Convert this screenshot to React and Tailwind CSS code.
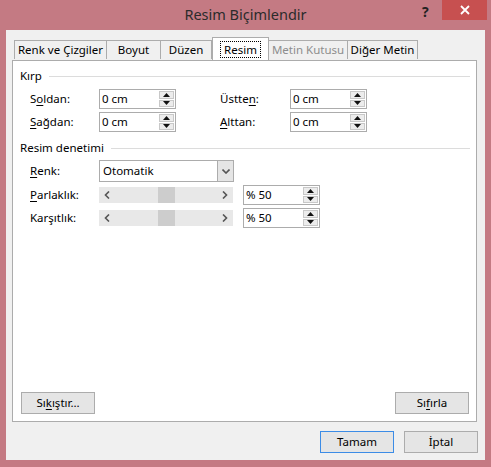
import React from "react";

const font = { fontFamily: '"Noto Sans", "Open Sans", sans-serif' };

function U({ children }) {
  return <span className="underline underline-offset-2">{children}</span>;
}

function SpinBtns() {
  return (
    <div className="flex w-[16px] flex-col gap-[1px] p-[1px] pl-0">
      <div className="flex flex-1 items-center justify-center border border-[#c8c8c8] bg-[#ececec]">
        <svg width="7" height="4" viewBox="0 0 7 4"><path d="M0 4 L3.5 0 L7 4 Z" fill="#111" /></svg>
      </div>
      <div className="flex flex-1 items-center justify-center border border-[#c8c8c8] bg-[#ececec]">
        <svg width="7" height="4" viewBox="0 0 7 4"><path d="M0 0 L3.5 4 L7 0 Z" fill="#111" /></svg>
      </div>
    </div>
  );
}

function Spin({ value }) {
  return (
    <div className="flex h-[20px] w-[77px] shrink-0 border border-[#acacac] bg-white">
      <div className="flex flex-1 items-center pl-[2px] text-black">{value}</div>
      <SpinBtns />
    </div>
  );
}

function Slider() {
  return (
    <div className="flex h-[16px] w-[134px] shrink-0 items-center bg-[#e8e8e8]">
      <div className="flex w-[16px] justify-center">
        <svg width="6" height="8" viewBox="0 0 6 8"><path d="M5 0.5 L1.5 4 L5 7.5" fill="none" stroke="#555" strokeWidth="1.6" /></svg>
      </div>
      <div className="w-[43px]" />
      <div className="h-[16px] w-[17px] bg-[#cdcdcd]" />
      <div className="flex-1" />
      <div className="flex w-[16px] justify-center">
        <svg width="6" height="8" viewBox="0 0 6 8"><path d="M1 0.5 L4.5 4 L1 7.5" fill="none" stroke="#555" strokeWidth="1.6" /></svg>
      </div>
    </div>
  );
}

function Btn({ children, primary }) {
  return (
    <div
      className={`flex h-[22px] w-[74px] items-center justify-center border bg-[#e5e5e5] text-black ${
        primary ? "border-[#3c8ce6]" : "border-[#acacac]"
      }`}
    >
      {children}
    </div>
  );
}

function Tab({ children, w, cls = "", disabled }) {
  return (
    <div
      className={`mt-[3px] flex h-[19px] ${w} items-center justify-center border border-b-0 border-[#acacac] bg-[#f0f0f0] ${cls} ${
        disabled ? "text-[#8d8d8d]" : "text-black"
      }`}
    >
      {children}
    </div>
  );
}

function Group({ title }) {
  return (
    <div className="flex h-[16px] items-center">
      <span className="text-black">{title}</span>
      <div className="ml-[7px] mr-[6px] h-[1px] flex-1 bg-[#dcdcdc]" />
    </div>
  );
}

export default function App() {
  return (
    <div className="flex h-[467px] w-[491px] flex-col bg-[#c47a83]" style={font}>
      {/* title bar */}
      <div className="relative flex h-[30px] items-center justify-center">
        <span className="text-[14.5px] text-[#2b2b2b]">Resim Biçimlendir</span>
        <span className="absolute left-[422px] top-[1px] text-[14px] font-bold text-[#222]">?</span>
        <div className="absolute left-[442px] top-0 flex h-[20px] w-[45px] items-center justify-center bg-[#c75050]">
          <svg width="10" height="10" viewBox="0 0 10 10">
            <path d="M1 1 L9 9 M9 1 L1 9" stroke="#fff" strokeWidth="1.8" />
          </svg>
        </div>
      </div>
      {/* client */}
      <div className="mx-[6px] mb-[7px] flex flex-1 flex-col bg-[#f0f0f0] text-[11.5px]">
        <div className="ml-[8px] mt-[7px] flex h-[23px] items-start">
          <Tab w="w-[92px]" cls="border-r-0">Renk ve Çizgiler</Tab>
          <Tab w="w-[54px]" cls="border-r-0">Boyut</Tab>
          <Tab w="w-[52px]">Düzen</Tab>
          <div className="relative z-10 -mb-[1px] flex h-[23px] w-[57px] items-center justify-center border border-b-0 border-[#acacac] bg-white">
            <span className="border border-dotted border-black px-[3px] leading-[15px] text-black">Resim</span>
          </div>
          <Tab w="w-[79px]" cls="border-l-0" disabled>Metin Kutusu</Tab>
          <Tab w="w-[70px]" cls="border-l-0">Diğer Metin</Tab>
        </div>
        <div className="ml-[6px] mr-[8px] flex h-[362px] flex-col border border-[#acacac] bg-white pl-[7px]">
          <div className="mt-[7px]">
            <Group title="Kırp" />
          </div>
          <div className="mt-[5px] flex flex-col gap-[3px] pl-[10px]">
            <div className="flex items-center">
              <div className="w-[69px] shrink-0">S<U>o</U>ldan:</div>
              <Spin value="0 cm" />
              <div className="w-[44px] shrink-0" />
              <div className="w-[70px] shrink-0">Üstte<U>n</U>:</div>
              <Spin value="0 cm" />
            </div>
            <div className="flex items-center">
              <div className="w-[69px] shrink-0"><U>S</U>ağdan:</div>
              <Spin value="0 cm" />
              <div className="w-[44px] shrink-0" />
              <div className="w-[70px] shrink-0"><U>A</U>lttan:</div>
              <Spin value="0 cm" />
            </div>
          </div>
          <div className="mt-[8px]">
            <Group title="Resim denetimi" />
          </div>
          <div className="mt-[4px] flex items-center pl-[10px]">
            <div className="w-[69px] shrink-0"><U>R</U>enk:</div>
            <div className="flex h-[22px] w-[135px] border border-[#acacac] bg-white">
              <div className="flex flex-1 items-center pl-[3px] text-black">Otomatik</div>
              <div className="flex w-[16px] items-center justify-center border-l border-[#acacac] bg-[#e5e5e5]">
                <svg width="8" height="5" viewBox="0 0 8 5"><path d="M0.5 0.5 L4 4 L7.5 0.5" fill="none" stroke="#555" strokeWidth="1.6" /></svg>
              </div>
            </div>
          </div>
          <div className="mt-[3px] flex items-center pl-[10px]">
            <div className="w-[69px] shrink-0"><U>P</U>arlaklık:</div>
            <Slider />
            <div className="ml-[10px]"><Spin value="% 50" /></div>
          </div>
          <div className="mt-[3px] flex items-center pl-[10px]">
            <div className="w-[69px] shrink-0">Karşıtlık:</div>
            <Slider />
            <div className="ml-[10px]"><Spin value="% 50" /></div>
          </div>
          <div className="flex-1" />
          <div className="mb-[7px] flex justify-between pl-[1px] pr-[7px]">
            <Btn>Sı<U>k</U>ıştır…</Btn>
            <Btn>Sı<U>f</U>ırla</Btn>
          </div>
        </div>
        <div className="mt-[9px] flex justify-end gap-[10px] pr-[7px]">
          <Btn primary>Tamam</Btn>
          <Btn>İptal</Btn>
        </div>
      </div>
    </div>
  );
}
